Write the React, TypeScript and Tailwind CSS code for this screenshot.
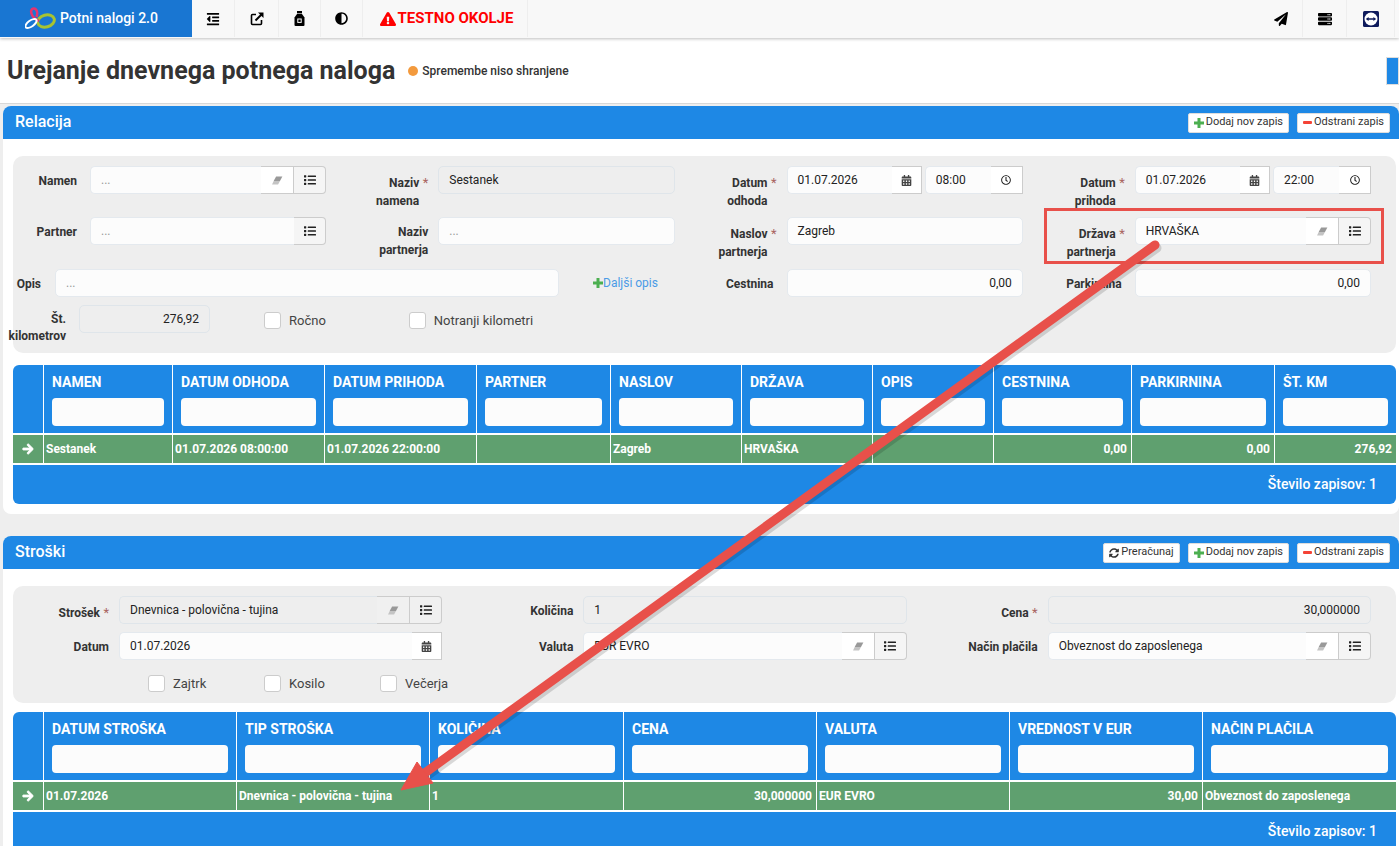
import type { ReactNode } from "react";
import {
  FaAdjust,
  FaArrowRight,
  FaCalendarAlt,
  FaExclamationTriangle,
  FaList,
  FaOutdent,
  FaPaperPlane,
  FaRegClock,
  FaServer,
  FaSyncAlt,
} from "react-icons/fa";

const Logo = () => (
  <svg viewBox="5 2 31 23" className="h-[23px] w-[31px] shrink-0" fill="none">
    <ellipse cx="26" cy="16" rx="8.5" ry="6" stroke="#a7c331" strokeWidth="3" transform="rotate(-15 26 16)" />
    <path d="M19 16C11 13 9 4 13.5 3.5C17 3.2 18 8 16.5 12" stroke="#e5336f" strokeWidth="2.5" />
    <ellipse cx="11" cy="18.5" rx="6.5" ry="3" stroke="#ffffff" strokeWidth="2" transform="rotate(-35 11 18.5)" />
  </svg>
);

const TeamViewer = () => (
  <svg viewBox="0 0 16 16" className="h-[16px] w-[16px]">
    <rect width="16" height="16" rx="1.5" fill="#0e1a5c" />
    <circle cx="8" cy="8" r="6.5" fill="#ffffff" />
    <path d="M2.8 8 5.6 6v1.2h4.8V6l2.8 2-2.8 2V8.8H5.6V10z" fill="#0e1a5c" />
  </svg>
);

const ExternalLink = () => (
  <svg viewBox="0 0 14 14" className="h-[14px] w-[14px]" fill="none">
    <path d="M6 2.5H2.5a1 1 0 0 0-1 1v8a1 1 0 0 0 1 1h8a1 1 0 0 0 1-1V8" stroke="#000000" strokeWidth="1.6" />
    <path d="M5.5 8.5 11.5 2.5" stroke="#000000" strokeWidth="2" />
    <path d="M8 .5h5.5V6z" fill="#000000" />
  </svg>
);

const Bag = () => (
  <svg viewBox="0 0 11 15" className="h-[15px] w-[11px]">
    <rect x="3" y="0" width="5" height="2.4" fill="#000000" />
    <path d="M3 3h5l2.5 3.5V14a1 1 0 0 1-1 1h-8a1 1 0 0 1-1-1V6.5z" fill="#000000" />
    <rect x="3.8" y="8" width="3.4" height="3.4" fill="none" stroke="#ffffff" strokeWidth="1" />
  </svg>
);

const Eraser = () => (
  <svg viewBox="0 0 12 10" className="h-[9px] w-[12px]">
    <path d="M5 .5H12L9.3 5.5H2.3Z" fill="#999999" />
    <path d="M2.3 5.5H9.3L7.2 9.5H.5Z" fill="#c4c4c4" />
  </svg>
);

const Plus = () => (
  <svg viewBox="0 0 10 10" className="h-[10px] w-[10px] shrink-0">
    <path d="M3.5 0h3v3.5H10v3H6.5V10h-3V6.5H0v-3h3.5z" fill="#4caf50" />
  </svg>
);

const NavCell = ({ children }: { children: ReactNode }) => (
  <div className="flex h-[37px] items-center justify-center border-r border-[#eeeeee] text-[14px] text-black">{children}</div>
);

const Label = ({ children, req, className }: { children: ReactNode; req?: boolean; className?: string }) => (
  <div
    className={`flex shrink-0 justify-end text-right text-[12px] font-bold leading-[18px] text-[#333333] ${
      req ? "pt-[8px]" : "pt-[6px]"
    } ${className ?? "w-[66px]"}`}
  >
    <div className="min-w-0">{children}</div>
    {req && <span className="w-[9px] shrink-0 text-[13px] font-normal text-[#a9645f]">*</span>}
  </div>
);

const Input = ({
  value,
  disabled,
  right,
  className,
}: {
  value?: string;
  disabled?: boolean;
  right?: boolean;
  className?: string;
}) => (
  <div
    className={`flex h-[28px] min-w-0 flex-1 items-center rounded-[5px] border px-[10px] text-[12px] ${
      disabled ? "border-[#dfe5ea] bg-[#eeeeee]" : "border-[#e4e9ee] bg-[#fcfcfc]"
    } ${right ? "justify-end" : ""} ${value ? "text-[#222222]" : "text-[#999999]"} ${className ?? ""}`}
  >
    {value ?? "..."}
  </div>
);

const Addon = ({ children, bg, className }: { children: ReactNode; bg: string; className?: string }) => (
  <div className={`flex h-[28px] shrink-0 items-center justify-center border border-l-0 border-[#cccccc] ${bg} ${className ?? "w-[32px]"}`}>
    {children}
  </div>
);

const Lookup = ({ value, disabled, eraser = true }: { value?: string; disabled?: boolean; eraser?: boolean }) => (
  <div className="flex min-w-0 flex-1">
    <Input value={value} disabled={disabled} className="rounded-r-none border-r-0" />
    {eraser && (
      <Addon bg={disabled ? "bg-[#f0f0f0]" : "bg-white"} className="w-[33px] border-l">
        <Eraser />
      </Addon>
    )}
    <Addon bg={disabled ? "bg-[#f0f0f0]" : "bg-[#f5f5f5]"} className={`w-[32px] rounded-r-[4px] ${eraser ? "" : "border-l"}`}>
      <FaList className="text-[12px] text-[#222222]" />
    </Addon>
  </div>
);

const DateInput = ({ date }: { date: string }) => (
  <div className="flex min-w-0 flex-1">
    <Input value={date} className="rounded-r-none border-r-0" />
    <Addon bg="bg-white" className="w-[30px] border-l">
      <FaCalendarAlt className="text-[11px] text-[#444444]" />
    </Addon>
  </div>
);

const DateTime = ({ date, time }: { date: string; time: string }) => (
  <div className="flex min-w-0 flex-1">
    <DateInput date={date} />
    <div className="ml-[3px] flex w-[98px] shrink-0">
      <Input value={time} className="rounded-r-none border-r-0" />
      <Addon bg="bg-white" className="w-[32px] border-l">
        <FaRegClock className="text-[10px] text-[#222222]" />
      </Addon>
    </div>
  </div>
);

const Field = ({ label, req, children, width }: { label: ReactNode; req?: boolean; children: ReactNode; width?: string }) => (
  <div className="flex items-start">
    <Label req={req} className={width ?? "w-[66px]"}>
      {label}
    </Label>
    <div className="ml-[10px] flex min-w-0 flex-1">{children}</div>
  </div>
);

const Short = ({ children }: { children: ReactNode }) => <span className="pr-[3px]">{children}</span>;

const Check = ({ label }: { label: string }) => (
  <div className="flex items-center text-[13px] leading-[17px] text-[#444444]">
    <span className="mr-[8px] h-[17px] w-[17px] rounded-[3px] border border-[#cccccc] bg-white" />
    {label}
  </div>
);

const PanelButton = ({ icon, children }: { icon: ReactNode; children: ReactNode }) => (
  <div className="flex h-[20px] items-center gap-[2px] rounded-[2px] border border-[#dddddd] bg-white px-[5px] text-[11px] text-[#333333]">
    {icon}
    {children}
  </div>
);

const Add = () => <PanelButton icon={<Plus />}>Dodaj nov zapis</PanelButton>;
const Remove = () => (
  <PanelButton icon={<span className="h-[3px] w-[9px] rounded-[1px] bg-[#f44336]" />}>Odstrani zapis</PanelButton>
);

const PanelHead = ({ title, children }: { title: string; children: ReactNode }) => (
  <div className="flex h-[33px] items-center justify-between rounded-t-[8px] bg-[#1e88e5] pl-[12px] pr-[9px]">
    <span className="pb-[2px] text-[16px] font-medium text-white">{title}</span>
    <div className="flex gap-[8px]">{children}</div>
  </div>
);

type Cell = { text: string; right?: boolean };

const Table = ({ template, heads, cells }: { template: string; heads: string[]; cells: Cell[] }) => (
  <div className="mr-[3px] ml-[10px] overflow-hidden rounded-[6px] bg-[#1e88e5]">
    <div className={`grid ${template} h-[70px] border-b-2 border-white`}>
      <div />
      {heads.map((h) => (
        <div key={h} className="border-l border-white px-[8px] pt-[9px]">
          <div className="h-[24px] truncate text-[14px] font-bold leading-[17px] text-white">{h}</div>
          <div className="h-[28px] rounded-[4px] bg-[#fcfcfc]" />
        </div>
      ))}
    </div>
    <div className={`grid ${template} h-[30px] border-b-2 border-white bg-[#5fa06f]`}>
      <div className="flex items-center justify-center">
        <FaArrowRight className="text-[12px] text-white" stroke="currentColor" strokeWidth={40} />
      </div>
      {cells.map((c, i) => (
        <div
          key={i}
          className={`flex items-center truncate border-l border-white pl-[2px] text-[12px] font-bold text-white ${
            c.right ? "justify-end pr-[4px]" : "pr-[3px]"
          }`}
        >
          {c.text}
        </div>
      ))}
    </div>
    <div className="flex h-[39px] items-center justify-end pr-[19px] text-[14px] font-medium text-white">Število zapisov: 1</div>
  </div>
);

export default function App() {
  return (
    <div className="relative h-[846px] overflow-hidden bg-[#eeeeee] font-['Roboto',sans-serif] text-[#333333]">
      {/* nav */}
      <div className="relative z-10 flex h-[38px] bg-[#f8f8f8] shadow-[0_1px_3px_rgba(0,0,0,0.25)]">
        <div className="flex h-[37px] w-[192px] items-center gap-[4px] bg-[#1976d2] pl-[25px]">
          <Logo />
          <span className="text-[14px] font-medium text-white">Potni nalogi 2.0</span>
        </div>
        <div className="grid h-[37px] grid-cols-[43px_44px_42px_42px_165px]">
          <NavCell>
            <FaOutdent />
          </NavCell>
          <NavCell>
            <ExternalLink />
          </NavCell>
          <NavCell>
            <Bag />
          </NavCell>
          <NavCell>
            <FaAdjust className="text-[13px]" />
          </NavCell>
          <NavCell>
            <span className="ml-[3px] flex items-center gap-[2px] text-[15px] font-bold text-[#ff0000]">
              <FaExclamationTriangle className="text-[16px]" />
              TESTNO OKOLJE
            </span>
          </NavCell>
        </div>
        <div className="ml-auto grid h-[37px] grid-cols-[43px_44px_48px] pr-[4px]">
          <NavCell>
            <FaPaperPlane />
          </NavCell>
          <NavCell>
            <FaServer />
          </NavCell>
          <NavCell>
            <TeamViewer />
          </NavCell>
        </div>
      </div>

      {/* title */}
      <div className="flex h-[66px] items-center border-b border-[#d8d8d8] bg-white pl-[7px]">
        <h1 className="text-[25px] font-bold text-[#333333]">Urejanje dnevnega potnega naloga</h1>
        <span className="ml-[13px] h-[10px] w-[10px] rounded-full bg-[#f39a3d]" />
        <span className="ml-[4px] text-[12px] font-medium text-[#333333]">Spremembe niso shranjene</span>
        <div className="ml-auto h-[28px] w-[13px] border border-[#dddddd] bg-[#1e88e5]" />
      </div>

      {/* relacija */}
      <div className="mt-[2px] ml-[3px] h-[408px] rounded-[8px] bg-white">
        <PanelHead title="Relacija">
          <Add />
          <Remove />
        </PanelHead>
        <div className="mt-[17px] mr-[3px] ml-[10px] h-[197px] rounded-[10px] bg-[#eeeeee] pt-[10px] pr-[25px] pl-[1px]">
          <div className="grid grid-cols-4 grid-rows-[51px_52px_36px_36px] gap-x-[36px]">
            <Field label={<Short>Namen</Short>}>
              <Lookup />
            </Field>
            <Field label="Naziv namena" req>
              <Input value="Sestanek" disabled />
            </Field>
            <Field label="Datum odhoda" req>
              <DateTime date="01.07.2026" time="08:00" />
            </Field>
            <Field label="Datum prihoda" req>
              <DateTime date="01.07.2026" time="22:00" />
            </Field>

            <Field label={<Short>Partner</Short>}>
              <Lookup eraser={false} />
            </Field>
            <Field label="Naziv partnerja">
              <Input />
            </Field>
            <Field label="Naslov partnerja" req>
              <Input value="Zagreb" />
            </Field>
            <Field label="Država partnerja" req>
              <Lookup value="HRVAŠKA" />
            </Field>

            <div className="col-span-2 flex items-start">
              <Label className="w-[27px]">Opis</Label>
              <Input className="ml-[14px] max-w-[504px]" />
              <span className="ml-[34px] flex h-[28px] items-center text-[12px] text-[#4b9be6]">
                <Plus />
                Daljši opis
              </span>
            </div>
            <Field label={<Short>Cestnina</Short>}>
              <Input value="0,00" right />
            </Field>
            <Field label={<Short>Parkirnina</Short>}>
              <Input value="0,00" right />
            </Field>

            <div className="col-span-4 flex items-start">
              <div className="-ml-[6px] w-[58px] shrink-0 pt-[6px] text-right text-[12px] font-bold leading-[17px] text-[#333333]">
                Št. kilometrov
              </div>
              <div className="ml-[13px] flex w-[131px]">
                <Input value="276,92" disabled right />
              </div>
              <div className="mt-[7px] ml-[54px]">
                <Check label="Ročno" />
              </div>
              <div className="mt-[7px] ml-[83px]">
                <Check label="Notranji kilometri" />
              </div>
            </div>
          </div>
        </div>
        <div className="mt-[12px]">
          <Table
            template="grid-cols-[30px_129px_152px_152px_134px_131px_131px_121px_138px_143px_122px]"
            heads={["NAMEN", "DATUM ODHODA", "DATUM PRIHODA", "PARTNER", "NASLOV", "DRŽAVA", "OPIS", "CESTNINA", "PARKIRNINA", "ŠT. KM"]}
            cells={[
              { text: "Sestanek" },
              { text: "01.07.2026 08:00:00" },
              { text: "01.07.2026 22:00:00" },
              { text: "" },
              { text: "Zagreb" },
              { text: "HRVAŠKA" },
              { text: "" },
              { text: "0,00", right: true },
              { text: "0,00", right: true },
              { text: "276,92", right: true },
            ]}
          />
        </div>
      </div>

      {/* stroski */}
      <div className="mt-[22px] ml-[3px] rounded-[8px] bg-white pb-[10px]">
        <PanelHead title="Stroški">
          <PanelButton icon={<FaSyncAlt className="text-[10px] text-[#333333]" />}>Preračunaj</PanelButton>
          <Add />
          <Remove />
        </PanelHead>
        <div className="mt-[17px] mr-[3px] ml-[10px] h-[117px] rounded-[10px] bg-[#eeeeee] pt-[10px] pr-[25px] pl-[1px]">
          <div className="grid grid-cols-3 grid-rows-[36px_43px_28px] gap-x-[36px]">
            <Field label="Strošek" req width="w-[95px]">
              <Lookup value="Dnevnica - polovična - tujina" disabled />
            </Field>
            <Field label="Količina" width="w-[95px]">
              <Input value="1" disabled />
            </Field>
            <Field label="Cena" req width="w-[95px]">
              <Input value="30,000000" disabled right />
            </Field>

            <Field label="Datum" width="w-[95px]">
              <DateInput date="01.07.2026" />
            </Field>
            <Field label="Valuta" width="w-[95px]">
              <Lookup value="EUR EVRO" />
            </Field>
            <Field label="Način plačila" width="w-[95px]">
              <Lookup value="Obveznost do zaposlenega" />
            </Field>

            <div className="col-span-3 grid grid-cols-[116px_116px_116px] items-start pl-[134px]">
              <Check label="Zajtrk" />
              <Check label="Kosilo" />
              <Check label="Večerja" />
            </div>
          </div>
        </div>
        <div className="mt-[9px]">
          <Table
            template="grid-cols-[30px_193px_193px_194px_193px_193px_193px_194px]"
            heads={["DATUM STROŠKA", "TIP STROŠKA", "KOLIČINA", "CENA", "VALUTA", "VREDNOST V EUR", "NAČIN PLAČILA"]}
            cells={[
              { text: "01.07.2026" },
              { text: "Dnevnica - polovična - tujina" },
              { text: "1" },
              { text: "30,000000", right: true },
              { text: "EUR EVRO" },
              { text: "30,00", right: true },
              { text: "Obveznost do zaposlenega" },
            ]}
          />
        </div>
      </div>

      {/* annotations */}
      <div className="absolute top-[208px] left-[1044px] z-20 h-[56px] w-[340px] border-[3px] border-[#e8504a]" />
      <svg className="pointer-events-none absolute top-0 left-0 z-20 h-[846px] w-[1399px]" viewBox="0 0 1399 846" fill="none">
        <path d="M1155 245 L 422 775" stroke="rgba(0,0,0,0.14)" strokeWidth="9" strokeLinecap="round" transform="translate(2 3)" />
        <path d="M1155 245 L 422 775" stroke="#e8504a" strokeWidth="9" strokeLinecap="round" />
        <path d="M401 790 L417 762 L433 783 Z" fill="#e8504a" stroke="#e8504a" strokeWidth="1" />
      </svg>
    </div>
  );
}
